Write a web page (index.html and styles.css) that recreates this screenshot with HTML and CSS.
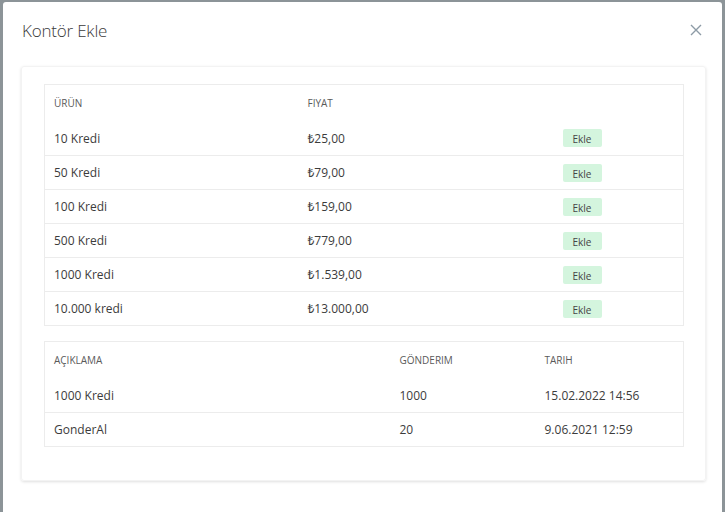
FILE: index.html
```html
<!DOCTYPE html>
<html lang="tr">
  <head>
    <meta charset="UTF-8" />
    <meta name="viewport" content="width=device-width, initial-scale=1.0" />
    <title>Kontör Ekle</title>
    <link rel="stylesheet" href="styles.css">
  </head>
  <body>
    <div class="modal">
      <div class="modal-header">
        <h2 class="modal-title">Kontör Ekle</h2>
        <button class="close-btn" type="button" aria-label="Kapat">
          <svg width="12" height="12" viewBox="0 0 12 12">
            <path d="M1 1 L11 11 M11 1 L1 11" stroke="#8d9ba6" stroke-width="1.4" fill="none" />
          </svg>
        </button>
      </div>

      <div class="modal-body">
        <div class="card">
          <!-- Products -->
          <table class="grid products">
            <thead>
              <tr>
                <th class="col-name">Ürün</th>
                <th class="col-price">Fıyat</th>
                <th></th>
              </tr>
            </thead>
            <tbody>
              <tr><td>10 Kredi</td><td>₺25,00</td><td><button class="add-btn">Ekle</button></td></tr>
              <tr><td>50 Kredi</td><td>₺79,00</td><td><button class="add-btn">Ekle</button></td></tr>
              <tr><td>100 Kredi</td><td>₺159,00</td><td><button class="add-btn">Ekle</button></td></tr>
              <tr><td>500 Kredi</td><td>₺779,00</td><td><button class="add-btn">Ekle</button></td></tr>
              <tr><td>1000 Kredi</td><td>₺1.539,00</td><td><button class="add-btn">Ekle</button></td></tr>
              <tr><td>10.000 kredi</td><td>₺13.000,00</td><td><button class="add-btn">Ekle</button></td></tr>
            </tbody>
          </table>

          <!-- History -->
          <table class="grid history">
            <thead>
              <tr>
                <th class="col-desc">Açıklama</th>
                <th class="col-count">Gönderım</th>
                <th>Tarıh</th>
              </tr>
            </thead>
            <tbody>
              <tr><td>1000 Kredi</td><td>1000</td><td>15.02.2022 14:56</td></tr>
              <tr><td>GonderAl</td><td>20</td><td>9.06.2021 12:59</td></tr>
            </tbody>
          </table>
        </div>
      </div>
    </div>
  </body>
</html>
```

FILE: styles.css
```css
* {
  margin: 0;
  padding: 0;
  box-sizing: border-box;
  font-family: "Open Sans", "Noto Sans", sans-serif;
}

body {
  background-color: #8c9498;
  color: #333;
  height: 512px;
  overflow: hidden;
}

.modal {
  margin: 2px 3px 0 3px;
  height: 510px;
  background-color: #fff;
  border-radius: 3px 3px 0 0;
}

.modal-header {
  display: flex;
  align-items: center;
  justify-content: space-between;
  padding: 10px 20px 0 19px;
  height: 46px;
}

.modal-title {
  font-size: 17px;
  font-weight: 300;
  color: #3a3a3a;
  letter-spacing: -0.2px;
}

.close-btn {
  border: none;
  background: none;
  display: flex;
  cursor: pointer;
}

.modal-body {
  padding: 18px 16px 0 18px;
}

.card {
  border: 1px solid #f3f3f3;
  border-radius: 3px;
  box-shadow: 0 1px 3px rgba(0, 0, 0, 0.13);
  padding: 17px 21px 33px 22px;
}

.grid {
  width: 100%;
  border-collapse: collapse;
  border: 1px solid #ececec;
  table-layout: fixed;
}

.grid + .grid {
  margin-top: 15px;
}

.grid th {
  height: 37px;
  padding: 0 9px;
  text-align: left;
  font-size: 10px;
  font-weight: 400;
  text-transform: uppercase;
  color: #5a5a5a;
}

.grid td {
  height: 34px;
  padding: 0 9px;
  font-size: 12px;
  color: #3c3c3c;
}

.grid tbody tr + tr td {
  border-top: 1px solid #ececec;
}

.products .col-name {
  width: 254px;
}

.products .col-price {
  width: 255px;
}

.history .col-desc {
  width: 346px;
}

.history .col-count {
  width: 145px;
}

.add-btn {
  width: 39px;
  height: 18px;
  padding-top: 2px;
  border: none;
  border-radius: 2px;
  background-color: #d4f5de;
  color: #444;
  font-size: 10px;
  cursor: pointer;
}
```
